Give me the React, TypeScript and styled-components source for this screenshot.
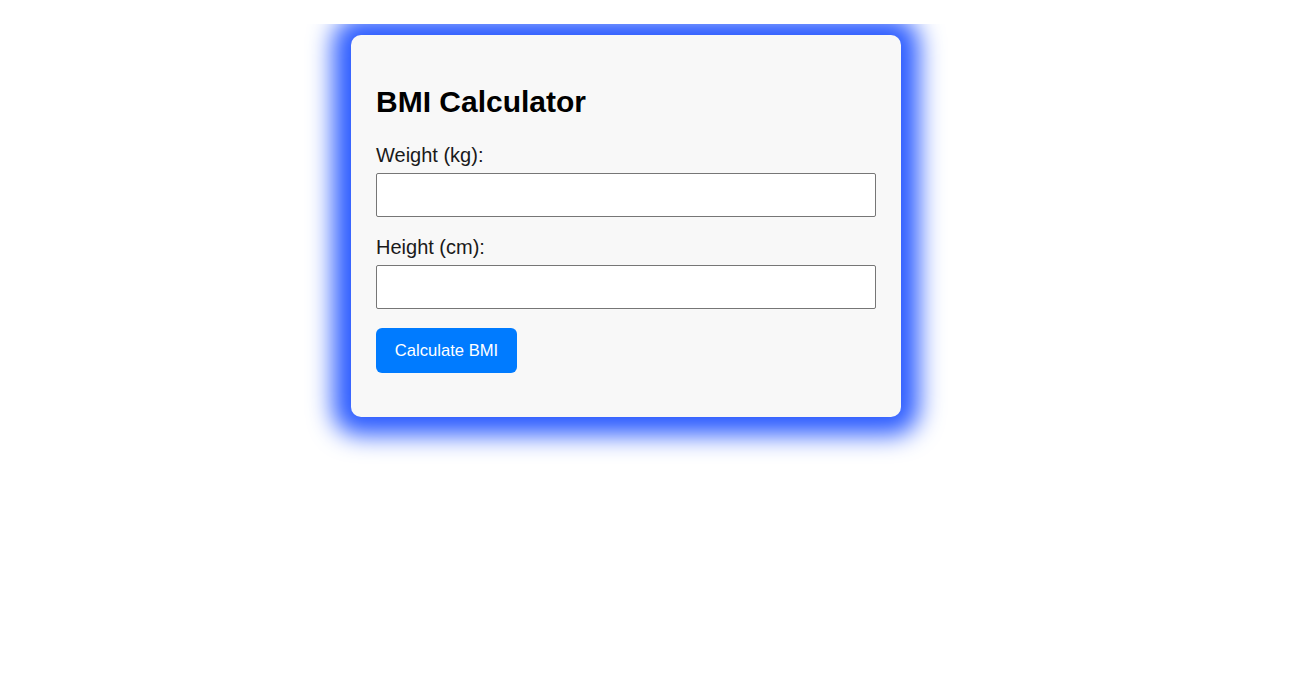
import React from "react";
import styled, { createGlobalStyle } from "styled-components";

const GlobalStyle = createGlobalStyle`
  html, body {
    margin: 0;
    padding: 0;
    background: #ffffff;
  }
  body {
    font-family: "Liberation Sans", Arial, sans-serif;
  }
`;

const Page = styled.div`
  display: flex;
  justify-content: flex-start;
  align-items: flex-start;
  padding-left: 291px;
`;

const Stage = styled.div`
  margin-top: 24px;
  padding: 11px 60px 60px;
  overflow: hidden;
`;

const Card = styled.div`
  width: 550px;
  box-sizing: border-box;
  padding: 25px;
  background: #f8f8f8;
  border-radius: 10px;
  box-shadow: 0 0 25px 18px #2c5cff;
`;

const Title = styled.h2`
  margin: 25px 0 25px;
  font-size: 30px;
  font-weight: 700;
  color: #000;
`;

const Label = styled.label`
  display: block;
  font-size: 20px;
  color: #1a1a1a;
  margin-bottom: 6px;
`;

const Input = styled.input`
  display: block;
  width: 100%;
  height: 44px;
  box-sizing: border-box;
  margin: 0 0 19px;
  padding: 0 10px;
  font-size: 20px;
  font-family: "Liberation Sans", Arial, sans-serif;
  background: #fff;
  border: 1px solid #767676;
  border-radius: 2px;
  outline: none;
`;

const Button = styled.button`
  display: block;
  margin: 0;
  width: 141px;
  height: 45px;
  border: none;
  border-radius: 6px;
  background: #007bff;
  color: #fff;
  font-family: "Liberation Sans", Arial, sans-serif;
  font-size: 16.6px;
  cursor: pointer;
`;

const Result = styled.div`
  margin-top: 19px;
`;

export default function App() {
  return (
    <>
      <GlobalStyle />
      <Page>
        <Stage>
          <Card>
            <Title>BMI Calculator</Title>
            <Label htmlFor="weight">Weight (kg):</Label>
            <Input id="weight" type="number" />
            <Label htmlFor="height">Height (cm):</Label>
            <Input id="height" type="number" />
            <Button type="button">Calculate BMI</Button>
            <Result />
          </Card>
        </Stage>
      </Page>
    </>
  );
}
